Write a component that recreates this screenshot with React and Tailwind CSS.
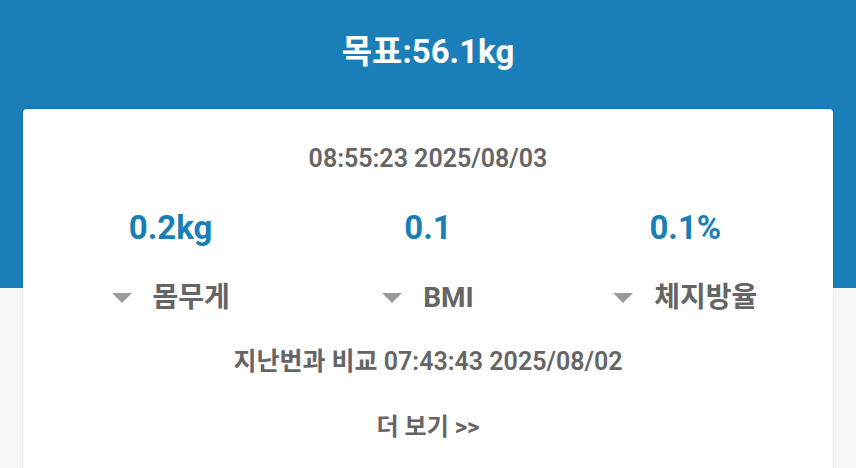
const font = { fontFamily: '"Roboto", "Noto Sans CJK KR", sans-serif' };

function Caret() {
  return (
    <svg width="20" height="10" viewBox="0 0 20 10" className="shrink-0">
      <path d="M0 0 H20 L10 10 Z" fill="#9a9a9a" />
    </svg>
  );
}

const stats = [
  { value: "0.2kg", label: "몸무게" },
  { value: "0.1", label: "BMI" },
  { value: "0.1%", label: "체지방율" },
];

export default function App() {
  return (
    <div
      className="h-[468px] w-full overflow-hidden bg-[linear-gradient(to_bottom,#1a7fb8_288px,#f8f8f8_288px)]"
      style={font}
    >
      <div className="flex h-[109px] items-center justify-center pb-[5px]">
        <h1 className="text-[33px] font-bold text-white">목표:56.1kg</h1>
      </div>

      <div className="mx-[23px] rounded-[4px] bg-white shadow-[0_0_3px_rgba(0,0,0,0.12)]">
        <div className="flex h-[100px] items-center justify-center text-[25px] font-semibold text-[#656565]">
          08:55:23 2025/08/03
        </div>

        <div className="grid grid-cols-3 px-[19px]">
          {stats.map((s) => (
            <div key={s.label} className="flex h-[38px] items-center justify-center text-[33px] font-bold text-[#1a7fb8]">
              {s.value}
            </div>
          ))}
          {stats.map((s) => (
            <div key={s.label + "-l"} className="flex h-[102px] items-center justify-center gap-[21px]">
              <Caret />
              <span className="text-[28px] font-bold text-[#656565]">{s.label}</span>
            </div>
          ))}
        </div>

        <div className="flex h-[26px] items-center justify-center text-[25px] font-semibold text-[#656565]">
          지난번과 비교 07:43:43 2025/08/02
        </div>

        <div className="flex h-[104px] items-center justify-center text-[24px] font-bold text-[#656565]">
          더 보기 &gt;&gt;
        </div>
      </div>
    </div>
  );
}
